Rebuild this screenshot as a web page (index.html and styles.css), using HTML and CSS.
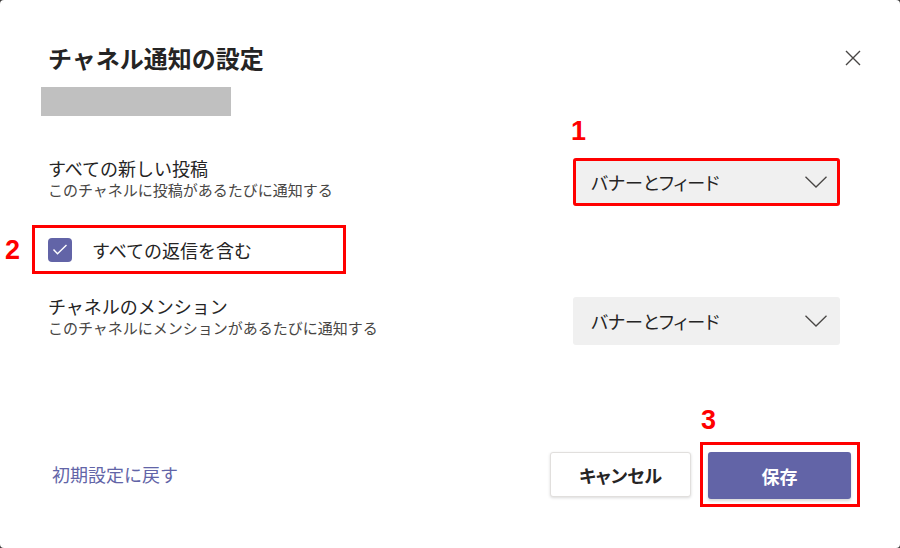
FILE: index.html
```html
<!DOCTYPE html>
<html lang="ja">
<head>
    <meta charset="UTF-8">
    <meta name="viewport" content="width=device-width, initial-scale=1.0">
    <title>チャネル通知の設定</title>
    <link rel="stylesheet" href="styles.css">
</head>
<body>
    <div class="dialog">
        <div class="header">
            <h1 class="title">チャネル通知の設定</h1>
            <button class="close" aria-label="閉じる">
                <svg width="16" height="16" viewBox="0 0 16 16">
                    <path d="M1 1 L15 15 M15 1 L1 15" stroke="#484644" stroke-width="1.4" fill="none"/>
                </svg>
            </button>
        </div>
        <div class="channel-name"></div>

        <div class="setting">
            <div class="setting-text">
                <div class="setting-label">すべての新しい投稿</div>
                <div class="setting-desc">このチャネルに投稿があるたびに通知する</div>
            </div>
            <div class="select marked">
                <span class="select-value">バナーとフィード</span>
                <svg class="chevron" width="22" height="12" viewBox="0 0 22 12">
                    <path d="M0.5 0.8 L11 11 L21.5 0.8" stroke="#484644" stroke-width="1.3" fill="none"/>
                </svg>
            </div>
        </div>

        <label class="reply-row marked">
            <span class="checkbox">
                <svg width="24" height="24" viewBox="0 0 24 24">
                    <path d="M5.5 11.5 L9.5 15.8 L18.5 7" stroke="#fff" stroke-width="1.4" fill="none"/>
                </svg>
            </span>
            <span class="reply-label">すべての返信を含む</span>
        </label>

        <div class="setting">
            <div class="setting-text">
                <div class="setting-label">チャネルのメンション</div>
                <div class="setting-desc">このチャネルにメンションがあるたびに通知する</div>
            </div>
            <div class="select">
                <span class="select-value">バナーとフィード</span>
                <svg class="chevron" width="22" height="12" viewBox="0 0 22 12">
                    <path d="M0.5 0.8 L11 11 L21.5 0.8" stroke="#484644" stroke-width="1.3" fill="none"/>
                </svg>
            </div>
        </div>

        <div class="footer">
            <a class="reset" href="#">初期設定に戻す</a>
            <div class="actions">
                <button class="btn btn-cancel">キャンセル</button>
                <span class="save-mark">
                    <button class="btn btn-save">保存</button>
                </span>
            </div>
        </div>

        <!-- annotation numbers -->
        <span class="step step-1">1</span>
        <span class="step step-2">2</span>
        <span class="step step-3">3</span>
    </div>
</body>
</html>
```

FILE: styles.css
```css
body {
    margin: 0;
    background: #3b3a39;
    font-family: "Noto Sans CJK JP", "Noto Sans", sans-serif;
    color: #252424;
}
.dialog {
    position: relative;
    box-sizing: border-box;
    width: 900px;
    height: 548px;
    background: #fff;
    border-radius: 4px;
    padding: 42px 39px 41px 48px;
    display: flex;
    flex-direction: column;
}
.header {
    display: flex;
    justify-content: space-between;
    align-items: center;
    height: 32px;
}
.title {
    margin: 0;
    font-size: 24px;
    line-height: 32px;
    font-weight: 700;
}
.close {
    border: none;
    background: none;
    padding: 0;
    width: 16px;
    height: 16px;
    margin-top: -1px;
    cursor: pointer;
}
.close svg {
    display: block;
}
.channel-name {
    width: 190px;
    height: 29px;
    margin: 13px 0 0 -7px;
    background: #c0c0c0;
}
.setting {
    display: flex;
    justify-content: space-between;
    align-items: flex-start;
    padding-right: 21px;
    margin-top: 40px;
}
.setting + .reply-row + .setting {
    margin-top: 20px;
}
.setting-label {
    font-size: 18px;
    line-height: 24px;
}
.setting-desc {
    font-size: 15px;
    line-height: 20px;
    color: #484644;
}
.select {
    box-sizing: border-box;
    width: 267px;
    height: 48px;
    margin-top: 2px;
    padding: 0 13px 0 18px;
    background: #f0f0f0;
    border-radius: 3px;
    display: flex;
    align-items: center;
    justify-content: space-between;
}
.setting + .reply-row + .setting .select {
    margin-top: 3px;
}
.select-value {
    font-size: 18px;
    color: #252424;
    font-feature-settings: "palt";
}
.chevron {
    display: block;
}
.marked {
    outline: 3px solid #f00;
    outline-offset: -3px;
}
.reply-row {
    box-sizing: border-box;
    display: flex;
    align-items: center;
    gap: 20px;
    width: 314px;
    height: 49px;
    margin: 19px 0 0 -16px;
    padding-left: 16px;
    cursor: pointer;
}
.checkbox {
    width: 24px;
    height: 24px;
    background: #6264a7;
    border-radius: 4px;
}
.checkbox svg {
    display: block;
}
.reply-label {
    font-size: 18px;
}
.footer {
    margin-top: auto;
    display: flex;
    justify-content: space-between;
    align-items: center;
}
.reset {
    margin-left: 4px;
    margin-top: -2px;
    font-size: 18px;
    color: #6264a7;
    text-decoration: none;
}
.actions {
    display: flex;
    align-items: center;
    gap: 9px;
    padding-right: 1px;
}
.save-mark {
    display: block;
    border: 3px solid #f00;
    padding: 7px 6px 5px 5px;
}
.btn {
    box-sizing: border-box;
    display: block;
    border-radius: 3px;
    font-family: inherit;
    font-size: 18px;
    font-weight: 700;
    cursor: pointer;
    font-feature-settings: "palt";
}
.btn-cancel {
    width: 141px;
    height: 45px;
    background: #fff;
    color: #252424;
    border: 1px solid #e1dfdd;
    box-shadow: 0 1px 3px rgba(0, 0, 0, 0.15);
}
.btn-save {
    width: 143px;
    height: 47px;
    background: #6264a7;
    color: #fff;
    border: none;
    box-shadow: 0 2px 3px rgba(0, 0, 0, 0.15);
}
.step {
    position: absolute;
    font-family: "Liberation Sans", Arial, sans-serif;
    font-weight: 700;
    font-size: 27px;
    line-height: 27px;
    color: #f00;
}
.step-1 {
    left: 571px;
    top: 118px;
}
.step-2 {
    left: 5px;
    top: 237px;
}
.step-3 {
    left: 701px;
    top: 407px;
}
```
